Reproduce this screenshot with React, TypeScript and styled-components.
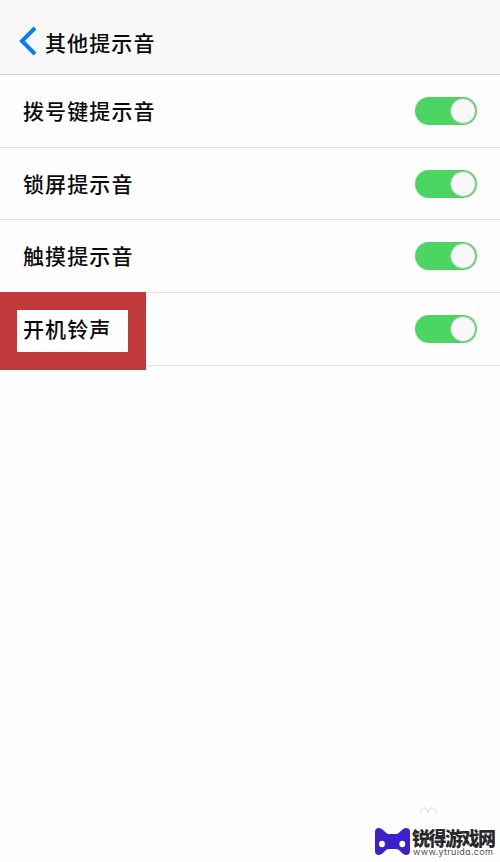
import React from "react";
import styled, { createGlobalStyle } from "styled-components";

const GlobalStyle = createGlobalStyle`
  * { box-sizing: border-box; }
  body { margin: 0; background: #fefefe; font-size: 0; }
`;

const Screen = styled.main`
  position: relative;
  width: 500px;
  height: 862px;
  overflow: hidden;
  background: #fefefe;
  color: #0b0b0b;
  font-family: "Noto Sans CJK SC", sans-serif;
`;

const Header = styled.header`
  display: flex;
  align-items: center;
  height: 75px;
  padding: 9px 0 0 19px;
  background: #f8f8f8;
  border-bottom: 1px solid #d2d2d3;
`;

const BackIcon = styled.svg`
  width: 18px;
  height: 30px;
  margin: -2px 8px 0 0;
`;

const Label = styled.span`
  font-size: 21px;
  font-weight: 500;
  line-height: 30px;
  letter-spacing: 1.1px;
  white-space: nowrap;
`;

const Title = styled(Label).attrs({ as: "h1" })`
  margin: 0;
`;

const Row = styled.div`
  display: flex;
  align-items: center;
  justify-content: space-between;
  height: 72.7px;
  padding: 0 23.5px 2px 23px;
  border-bottom: 1px solid #e2e2e3;
`;

const Toggle = styled.button`
  display: flex;
  align-items: center;
  justify-content: flex-end;
  width: 61.5px;
  height: 28px;
  margin-top: 2px;
  padding: 0 1px;
  border: 0;
  border-radius: 14px;
  background: #4bd664;
`;

const Knob = styled.span`
  width: 26px;
  height: 26px;
  border: 1px solid #91c99a;
  border-radius: 50%;
  background: #f8f8f8;
`;

const Highlight = styled.div`
  position: absolute;
  left: 0;
  top: 292px;
  width: 146px;
  height: 78px;
  border: solid #c03a3b;
  border-width: 18px 18px 18px 17px;
  background: #fefefe;
  display: flex;
  align-items: center;
  padding: 0 0 6px 6px;
`;

const Watermark = styled.footer`
  position: absolute;
  left: 375px;
  top: 827px;
  display: flex;
  gap: 2px;
`;

const Brand = styled.div`
  display: flex;
  flex-direction: column;
`;

const BrandName = styled.strong`
  height: 20px;
  color: #29292b;
  font-size: 18px;
  font-weight: 900;
  line-height: 20px;
  letter-spacing: -1.5px;
  white-space: nowrap;
  transform: scaleY(1.1);
`;

const BrandUrl = styled.span`
  padding-left: 1px;
  color: #505052;
  font: 9px/9px Inter, sans-serif;
  font-feature-settings: "cv11";
  letter-spacing: 0.35px;
`;

const Arcs = styled.svg`
  position: absolute;
  left: 419px;
  top: 806px;
`;

const settings = ["拨号键提示音", "锁屏提示音", "触摸提示音", "开机铃声"];

export default function App() {
  return (
    <Screen>
      <GlobalStyle />
      <Header>
        <BackIcon viewBox="0 0 18 30">
          <path d="M16 2 L3 15 L16 28" fill="none" stroke="#087bfa" strokeWidth="4" />
        </BackIcon>
        <Title>其他提示音</Title>
      </Header>
      {settings.map((name, i) => (
        <Row key={name}>
          {i < 3 ? <Label>{name}</Label> : <span />}
          <Toggle role="switch" aria-checked="true" aria-label={name}>
            <Knob />
          </Toggle>
        </Row>
      ))}
      <Highlight>
        <Label>开机铃声</Label>
      </Highlight>
      <Arcs width="19" height="10" viewBox="0 0 19 10">
        <path d="M1 8 Q2 2 5 2 Q8 2 9 7 Q10 2 13 2 Q16 2 18 8" fill="none" stroke="#e5e5e6" strokeWidth="1.3" />
      </Arcs>
      <Watermark>
        <svg width="35" height="29" viewBox="0 0 35 29">
          <path d="M0 5 Q0 1 4 1 Q6 1 8 3 L12 6.5 Q13 7 15 7 H20 Q22 7 23 6.5 L27 3 Q29 1 31 1 Q35 1 35 5 V24 Q35 28 31 28 Q29 28 27 26 L24 23 Q23 22 20 22 H15 Q12 22 11 23 L8 26 Q6 28 4 28 Q0 28 0 24 Z" fill="#3d20c9" />
          <ellipse cx="7" cy="17" rx="2.9" ry="3.2" fill="#fff" />
          <ellipse cx="27.3" cy="17" rx="2.9" ry="3.2" fill="#fff" />
        </svg>
        <Brand>
          <BrandName>锐得游戏网</BrandName>
          <BrandUrl>www.ytruida.com</BrandUrl>
        </Brand>
      </Watermark>
    </Screen>
  );
}
